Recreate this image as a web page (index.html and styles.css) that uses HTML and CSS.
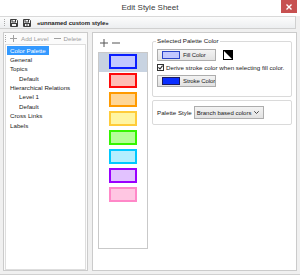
FILE: index.html
```html
<!DOCTYPE html>
<html>
<head>
<meta charset="utf-8">
<title>Edit Style Sheet</title>
<link rel="stylesheet" href="styles.css">
</head>
<body>
<div class="window">
  <div class="titlebar">
    <span></span>
    <span class="title">Edit Style Sheet</span>
    <span class="close"><svg width="6" height="6" viewBox="0 0 6 6"><path d="M0.5 0.5L5.5 5.5M5.5 0.5L0.5 5.5" stroke="#fff" stroke-width="1.4"/></svg></span>
  </div>
  <div class="toolbar">
    <span class="grip"></span>
    <svg class="floppy" width="8" height="8" viewBox="0 0 8 8"><path d="M0.5 0.5h6l1 1v6h-7z" fill="none" stroke="#3c3c3c"/><rect x="2" y="0.5" width="3.5" height="2.5" fill="none" stroke="#3c3c3c"/><rect x="1.5" y="4.5" width="5" height="3" fill="none" stroke="#3c3c3c"/></svg>
    <svg class="floppy" width="8" height="8" viewBox="0 0 8 8"><path d="M0.5 0.5h6l1 1v6h-7z" fill="none" stroke="#3c3c3c"/><rect x="2" y="0.5" width="3.5" height="2.5" fill="none" stroke="#3c3c3c"/><rect x="1.5" y="4.5" width="5" height="3" fill="none" stroke="#3c3c3c"/><path d="M3 6h2" stroke="#3c3c3c"/></svg>
    <span class="sheet-name">«unnamed custom style»</span>
  </div>
  <div class="main">
    <div class="left-panel">
      <div class="left-tools">
        <span class="grip"></span>
        <svg class="t-plus" width="7" height="7" viewBox="0 0 7 7"><path d="M3.5 0v7M0 3.5h7" stroke="#a0a0a0"/></svg>
        <span class="t-label">Add Level</span>
        <svg class="t-minus" width="7" height="7" viewBox="0 0 7 7"><path d="M0 3.5h7" stroke="#a0a0a0"/></svg>
        <span class="t-label2">Delete</span>
      </div>
      <div class="tree">
        <div class="item selected">Color Palette</div>
        <div class="item">General</div>
        <div class="item">Topics</div>
        <div class="item sub">Default</div>
        <div class="item">Hierarchical Relations</div>
        <div class="item sub">Level 1</div>
        <div class="item sub">Default</div>
        <div class="item">Cross Links</div>
        <div class="item">Labels</div>
      </div>
    </div>
    <div class="right-panel">
      <div class="palette-col">
        <div class="pm">
          <svg width="8" height="8" viewBox="0 0 8 8"><path d="M4 0v8M0 4h8" stroke="#555"/></svg>
          <svg width="8" height="8" viewBox="0 0 8 8"><path d="M0 4h8" stroke="#555"/></svg>
        </div>
        <div class="palette-list">
          <div class="row selected"><div class="swatch" style="--b:#0a1eff;--f:#c2c8ff"></div></div>
          <div class="row"><div class="swatch" style="--b:#ff0a0a;--f:#ffbdb5"></div></div>
          <div class="row"><div class="swatch" style="--b:#ff9a00;--f:#ffd696"></div></div>
          <div class="row"><div class="swatch" style="--b:#ffcc3a;--f:#fff5a2"></div></div>
          <div class="row"><div class="swatch" style="--b:#35f500;--f:#b4ff98"></div></div>
          <div class="row"><div class="swatch" style="--b:#00c8ff;--f:#b4efff"></div></div>
          <div class="row"><div class="swatch" style="--b:#9a00ff;--f:#e2c2ff"></div></div>
          <div class="row"><div class="swatch" style="--b:#ff88c8;--f:#ffc6e2"></div></div>
        </div>
      </div>
      <div class="props">
        <div class="group">
          <span class="legend">Selected Palette Color</span>
          <div class="line first">
            <div class="btn"><span class="sw sw-fill"></span><span class="btn-text">Fill Color</span></div>
            <span class="bw"><svg width="10" height="10" viewBox="0 0 10 10"><rect x="0.5" y="0.5" width="9" height="9" fill="#fff" stroke="#000"/><path d="M1 1H9V9Z" fill="#000"/></svg></span>
          </div>
          <div class="check">
            <span class="box"><svg width="5" height="5" viewBox="0 0 5 5"><path d="M0.4 2.4L2 4L4.6 0.6" fill="none" stroke="#222" stroke-width="1.1"/></svg></span>
            <span>Derive stroke color when selecting fill color.</span>
          </div>
          <div class="line second">
            <div class="btn"><span class="sw sw-stroke"></span><span class="btn-text">Stroke Color</span></div>
          </div>
        </div>
        <div class="group style-box">
          <span>Palette Style</span>
          <div class="select"><span class="select-text">Branch based colors</span><svg class="chev" width="5" height="3" viewBox="0 0 5 3"><path d="M0.3 0.3L2.5 2.5L4.7 0.3" fill="none" stroke="#444"/></svg></div>
        </div>
      </div>
    </div>
  </div>
</div>
</body>
</html>
```

FILE: styles.css
```css
html, body {
  margin: 0;
  padding: 0;
}

body {
  background: #f0f0f0;
  font-family: "Liberation Sans", Arial, sans-serif;
  font-size: 6.2px;
  color: #1a1a1a;
}

.window {
  width: 300px;
  height: 275px;
  box-sizing: border-box;
  border-bottom: 1px solid #d0d0d0;
  display: flex;
  flex-direction: column;
}

.titlebar {
  height: 16px;
  flex: none;
  background: #fff;
  display: grid;
  grid-template-columns: 1fr auto 1fr;
  align-items: start;
}

.title {
  font-size: 8px;
  line-height: 16px;
  color: #3a3a3a;
}

.close {
  justify-self: end;
  margin-right: 3px;
  width: 16px;
  height: 13px;
  background: #c75050;
  display: flex;
  align-items: center;
  justify-content: center;
}

.toolbar {
  height: 13px;
  flex: none;
  box-sizing: border-box;
  margin-right: 4px;
  border-top: 1px solid #d9d9d9;
  border-bottom: 1px solid #d0d0d0;
  border-right: 1px solid #d0d0d0;
  background: linear-gradient(#fcfcfc, #eceef0);
  display: flex;
  align-items: center;
}

.grip {
  width: 1px;
  height: 8px;
  margin-left: 4px;
  background: repeating-linear-gradient(#a8a8a8 0 1px, transparent 1px 2px);
}

.floppy {
  margin-left: 5px;
}

.sheet-name {
  margin-left: 6px;
  font-size: 6px;
  font-weight: bold;
  color: #222;
}

.main {
  flex: 1;
  display: flex;
  gap: 4px;
  padding: 3px 0 0 3px;
  min-height: 0;
}

.left-panel {
  width: 85px;
  height: 239px;
  box-sizing: border-box;
  border: 1px solid #cbcbcb;
  background: #fbfbfb;
  display: flex;
  flex-direction: column;
}

.left-tools {
  height: 11px;
  flex: none;
  display: flex;
  align-items: center;
  color: #9c9c9c;
}

.left-tools .grip {
  height: 7px;
  margin-left: 1px;
}

.t-plus {
  margin-left: 4px;
}

.t-label {
  margin-left: 4px;
}

.t-minus {
  margin-left: 5px;
}

.t-label2 {
  margin-left: 3px;
}

.tree {
  flex: 1;
  margin: 0 1px 0 1px;
  background: #fff;
  border: 1px solid #dedede;
  padding-top: 0.5px;
}

.item {
  width: fit-content;
  height: 9.4px;
  line-height: 9.4px;
  margin-left: 1px;
  padding: 0 3px;
  white-space: nowrap;
  color: #1a1a1a;
}

.item.sub {
  margin-left: 10px;
}

.item.selected {
  background: #3399ff;
  color: #fff;
}

.right-panel {
  width: 205px;
  height: 239px;
  box-sizing: border-box;
  border: 1px solid #cbcbcb;
  background: #fff;
  display: flex;
}

.palette-col {
  padding: 6px 0 0 5px;
  display: flex;
  flex-direction: column;
}

.pm {
  height: 8px;
  display: flex;
  gap: 4px;
  margin: 0 0 5px 2px;
}

.palette-list {
  width: 50px;
  height: 197px;
  box-sizing: border-box;
  border: 1px solid #c9c9c9;
  background: #fff;
}

.row {
  height: 19px;
  display: flex;
  justify-content: center;
  align-items: flex-start;
  padding-top: 1px;
  box-sizing: border-box;
}

.row.selected {
  background: #c8d3e1;
}

.swatch {
  width: 28px;
  height: 15px;
  box-sizing: border-box;
  border: 2px solid var(--b);
  background: var(--f);
}

.props {
  width: 140px;
  margin-left: 4px;
  padding-top: 8px;
}

.group {
  border: 1px solid #dadada;
  border-radius: 2px;
  padding: 0 4px 9px 4px;
}

.legend {
  display: block;
  width: fit-content;
  height: 8px;
  line-height: 8px;
  margin: -5px 0 0 -1px;
  padding: 0 1px;
  background: #fff;
  color: #1a1a1a;
}

.line {
  display: flex;
  align-items: center;
}

.line.first {
  margin-top: 4px;
}

.line.second {
  margin-top: 4px;
}

.btn {
  width: 59px;
  height: 12px;
  box-sizing: border-box;
  border: 1px solid #adadad;
  background: linear-gradient(#f3f3f3, #e2e2e2);
  display: flex;
  align-items: center;
  white-space: nowrap;
  color: #1a1a1a;
  overflow: hidden;
}

.btn-text {
  font-size: 6px;
  letter-spacing: -0.1px;
}

.sw {
  width: 18px;
  height: 8px;
  box-sizing: border-box;
  margin: 0 3px 0 4px;
  flex: none;
}

.sw-fill {
  background: #c2c8ff;
  border: 1px solid #2a45c8;
}

.sw-stroke {
  background: #0a2eff;
  border: 1px solid #1a1a60;
}

.bw {
  margin-left: 7px;
  width: 10px;
  height: 10px;
  display: flex;
}

.check {
  display: flex;
  align-items: center;
  height: 8px;
  margin-top: 2px;
  white-space: nowrap;
}

.box {
  width: 7px;
  height: 7px;
  box-sizing: border-box;
  border: 1px solid #333;
  background: #fff;
  margin-right: 2px;
  display: flex;
  align-items: center;
  justify-content: center;
}

.style-box {
  margin-top: 3px;
  padding: 5px 4px;
  display: flex;
  align-items: center;
}

.select {
  margin-left: 2px;
  width: 70px;
  height: 13px;
  box-sizing: border-box;
  border: 1px solid #adadad;
  background: linear-gradient(#f3f3f3, #e2e2e2);
  display: flex;
  align-items: center;
  padding-left: 2px;
  white-space: nowrap;
}

.select-text {
  font-size: 6px;
}

.chev {
  margin-left: auto;
  margin-right: 4px;
}
```
